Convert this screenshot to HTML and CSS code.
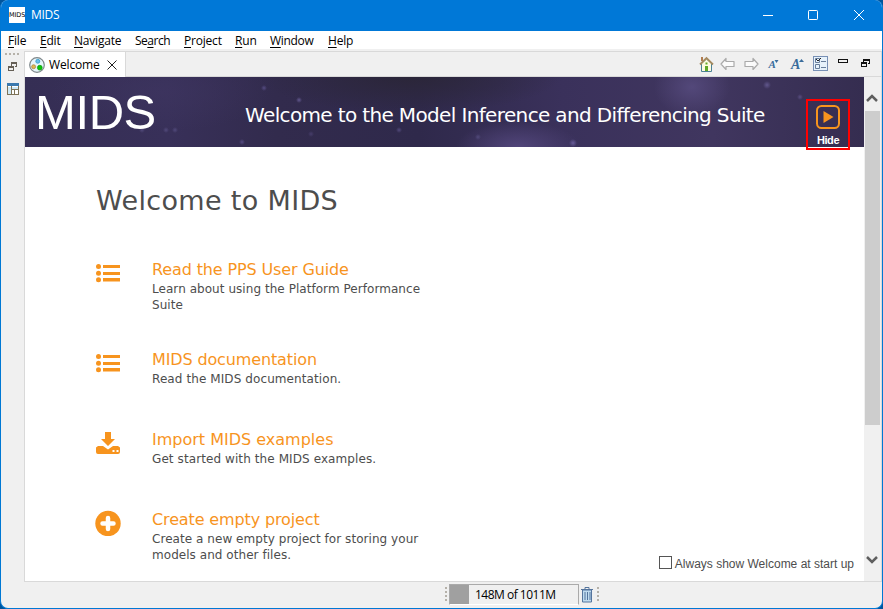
FILE: index.html
```html
<!DOCTYPE html>
<html lang="en">
<head>
<meta charset="utf-8">
<title>MIDS</title>
<link rel="stylesheet" href="styles.css">
</head>
<body>
<div class="window">
  <header class="titlebar">
    <span class="app-icon">MIDS</span>
    <span class="app-name">MIDS</span>
    <svg class="controls" width="102" height="12" viewBox="0 0 102 12" fill="none" stroke="#fff"><path d="M0 6.500h10"/><rect x="45.500" y="1.500" width="9" height="9" rx=".7"/><path d="M91 1l10 10M101 1L91 11"/></svg>
  </header>
  <nav class="menu">
    <span class="m-file"><u>F</u>ile</span><span class="m-edit"><u>E</u>dit</span><span class="m-nav"><u>N</u>avigate</span><span class="m-search">Se<u>a</u>rch</span><span class="m-project"><u>P</u>roject</span><span class="m-run"><u>R</u>un</span><span class="m-window"><u>W</u>indow</span><span class="m-help"><u>H</u>elp</span>
  </nav>
  <div class="workbench">
    <aside class="trim">
      <svg width="24" height="50" viewBox="0 0 24 50" shape-rendering="crispEdges">
        <path d="M4 5h14" stroke="#b5b1a9" stroke-width="2" stroke-dasharray="2 2"/>
        <g fill="none" stroke="#655f56"><path d="M10.500 17v-3.500h5v4h-2M10 14.500h6"/><path d="M7.500 17.500h5v4h-5zM7 18.500h6"/></g>
        <rect x="6.500" y="34.500" width="11" height="11" fill="#fff" stroke="#7d7358"/><path d="M6 34h12v3H6z" fill="#3b79ae"/><path d="M7 38h3v7H7zM11 38h6v2h-6z" fill="#cce8f6"/><path d="M10.500 37v8M10 40.500h8M13.500 40.500v4" stroke="#7d7358" fill="none"/>
      </svg>
    </aside>
    <main class="part">
      <div class="tabs">
        <div class="tab">
          <svg width="16" height="16" viewBox="0 0 16 16"><circle cx="8" cy="8" r="7.300" fill="#e6f5fb" stroke="#7e878a" stroke-width="1.200"/><circle cx="8.800" cy="4.300" r="2" fill="#68bfe8" stroke="#2892c5" stroke-width=".7"/><circle cx="4.600" cy="9.700" r="2" fill="#dfb454" stroke="#a88435" stroke-width=".7"/><circle cx="10.800" cy="10.700" r="2.400" fill="#0ac60a" stroke="#079407" stroke-width=".7"/></svg>
          <span>Welcome</span>
          <svg width="10" height="10" viewBox="0 0 10 10" stroke="#222"><path d="M.5.5l9 9M9.500.5l-9 9"/></svg>
        </div>
        <div class="tools">
          <svg width="180" height="24" viewBox="0 0 180 24">
            <path d="M4.500 11.500l5-4.500 5 4.500v8h-10z" fill="#fffbe1" stroke="#4c8295"/><path d="M5 5v4" stroke="#b07c50" stroke-width="2"/><path d="M3 12.500L9.500 6l6.500 6.500" fill="none" stroke="#a58a60" stroke-width="1.800"/><path d="M8 14h3v5H8z" fill="#62a927"/><path d="M8.500 10.500h2v2h-2z" fill="#62a927"/>
            <g fill="#fbfbfb" stroke="#aaa" stroke-width="1.200" stroke-linejoin="round"><path d="M24 12l5-5.500v3h8v5h-8v3z"/><path d="M61 12l-5-5.500v3h-8v5h8v3z"/></g>
            <text class="font-small" x="71.500" y="16">A</text><path d="M77.500 8h4l-2 3z" fill="#396c9c"/>
            <text class="font-large" x="94" y="17">A</text><path d="M102 10h5l-2.500-3z" fill="#396c9c"/>
            <rect x="116.500" y="4.500" width="14" height="14" fill="#e7f2fb" stroke="#7890b5"/><g fill="none" stroke="#687e9b"><path d="M118.500 6.500h4v4h-4zM118.500 12.500h4v4h-4zM124 9.500h5M124 15.500h5"/><path d="M119 7l2 2 3-3" stroke="#222"/></g>
            <g fill="none" stroke="#111" shape-rendering="crispEdges"><rect x="141.500" y="7.500" width="9" height="3"/><path d="M166.500 10V7.500h6v4h-2M166 8.500h7M164.500 10.500h5v4h-5zM164 11.500h6"/></g>
          </svg>
        </div>
      </div>
      <div class="viewport">
        <div class="page">
          <section class="banner">
            <div class="logo">MIDS</div>
            <div class="headline">Welcome to the Model Inference and Differencing Suite</div>
            <div class="hide">
              <svg width="24" height="24" viewBox="0 0 24 24"><rect x="1" y="1" width="22" height="22" rx="4.500" fill="none" stroke="#f7941e" stroke-width="2"/><path d="M7.500 6v12l10-6z" fill="#f7941e"/></svg>
              <span>Hide</span>
            </div>
          </section>
          <section class="content">
            <h1>Welcome to MIDS</h1>
            <article class="entry first">
              <svg width="26" height="26" viewBox="0 0 26 26" fill="#f7941e"><g><circle cx="3.500" cy="6.500" r="2.500"/><circle cx="3.500" cy="13.200" r="2.500"/><circle cx="3.500" cy="19.800" r="2.500"/></g><path d="M8 5h17v3H8zM8 12h17v3H8zM8 18h17v3.500H8z"/></svg>
              <div><h2 class="t1">Read the PPS User Guide</h2><p>Learn about using the Platform Performance<br>Suite</p></div>
            </article>
            <article class="entry">
              <svg width="26" height="26" viewBox="0 0 26 26" fill="#f7941e"><g><circle cx="3.500" cy="6.500" r="2.500"/><circle cx="3.500" cy="13.200" r="2.500"/><circle cx="3.500" cy="19.800" r="2.500"/></g><path d="M8 5h17v3H8zM8 12h17v3H8zM8 18h17v3.500H8z"/></svg>
              <div><h2 class="t2">MIDS documentation</h2><p class="doc">Read the MIDS documentation.</p></div>
            </article>
            <article class="entry">
              <svg width="26" height="26" viewBox="0 0 26 26" fill="#f7941e"><path d="M10 2h6v7h4l-7 7-7-7h4z"/><path d="M3 16h5l5 3.500 5-3.500h5l2 1.500V22q0 2-2 2H3q-2 0-2-2v-4.500z"/><path d="M17.500 20h2v2h-2zM21.500 20h2v2h-2z" fill="#fff"/></svg>
              <div><h2 class="t3">Import MIDS examples</h2><p class="import">Get started with the MIDS examples.</p></div>
            </article>
            <article class="entry">
              <svg width="26" height="26" viewBox="0 0 26 26"><circle cx="13" cy="13.500" r="12.700" fill="#f7941e"/><path d="M13 8v11M7.500 13.500h11" stroke="#fff" stroke-width="4.500" stroke-linecap="round"/></svg>
              <div><h2 class="t4">Create empty project</h2><p>Create a new empty project for storing your<br>models and other files.</p></div>
            </article>
          </section>
          <label class="startup"><span class="box"></span>Always show Welcome at start up</label>
        </div>
        <div class="scrollbar">
          <svg width="16" height="34" viewBox="0 0 16 34"><path d="M3 24l5-5 5 5" fill="none" stroke="#5f5f5f" stroke-width="2.500"/></svg>
          <div class="thumb"></div>
          <svg width="16" height="34" viewBox="0 0 16 34"><path d="M3 10l5 5 5-5" fill="none" stroke="#5f5f5f" stroke-width="2.500"/></svg>
        </div>
      </div>
    </main>
  </div>
  <footer class="status">
    <i class="grip"></i>
    <div class="heap"><span class="used"></span><span class="heap-text">148M of 1011M</span></div>
    <svg width="18" height="21" viewBox="0 0 18 21"><path d="M3.500 6h9v12h-9z" fill="#bfdbef" stroke="#55759d"/><path d="M2 5.500h12M6 5V3.500h4V5M6 8v8M8.500 8v8M11 8v8" fill="none" stroke="#55759d"/></svg>
    <i class="grip end"></i>
  </footer>
</div>
</body>
</html>
```
FILE: styles.css
```css
* { box-sizing: border-box; }
body { margin: 0; background: #00559d; overflow: hidden; }
svg { display: block; flex: none; }
.window { width: 883px; height: 609px; border: solid #0078d4; border-width: 0 1px 1px; border-radius: 8px; overflow: hidden; display: flex; flex-direction: column; background: #f0f0f0; font: 12px/16px "Open Sans", sans-serif; color: #000; }
.titlebar { height: 31px; background: #0078d7; display: flex; align-items: center; padding: 0 17px 1px 8px; color: #fff; flex: none; }
.app-icon { width: 16px; height: 16px; background: #fff; color: #000; font: 6.5px/17px "DejaVu Sans", sans-serif; text-align: center; letter-spacing: -.1px; overflow: hidden; }
.app-name { margin-left: 6px; letter-spacing: -.3px; }
.controls { margin-left: auto; }
.menu { height: 18px; background: #fff; display: flex; padding-left: 7px; line-height: 20px; letter-spacing: -.2px; white-space: nowrap; flex: none; }
.menu u { text-underline-offset: 2px; text-decoration-thickness: 1px; text-decoration-skip-ink: none; }
.m-file { width: 32px; } .m-edit { width: 34px; } .m-nav { width: 61px; }
.m-search { width: 49px; letter-spacing: -.5px; } .m-project { width: 51px; } .m-run { width: 35px; } .m-window { width: 58px; letter-spacing: -.3px; }
.workbench { height: 533px; display: flex; flex: none; }
.trim { width: 23px; }
.trim svg { width: 24px; }
.part { flex: 1; margin-top: 2px; border: 1px solid #d9d9d9; display: flex; flex-direction: column; min-width: 0; }
.tabs { height: 25px; border-bottom: 1px solid #d9d9d9; display: flex; justify-content: space-between; flex: none; }
.tab { width: 101px; height: 25px; background: #fff; border-right: 1px solid #d9d9d9; display: flex; align-items: center; padding: 0 0 0 4px; }
.tab span { margin: 0 7px 0 4px; width: 51px; letter-spacing: -.15px; }
.tools { width: 184px; }
.font-small, .font-large { font: italic bold 11px "Liberation Serif", serif; fill: #396c9c; }
.font-large { font-size: 14px; }
.viewport { display: flex; height: 504px; }
.page { width: 839px; background: #fff; position: relative; }
.banner {
  height: 70px; display: flex; color: #fff;
  background:
    radial-gradient(circle at 117px 53px, #51497a 0, transparent 3px),
    radial-gradient(circle at 141px 53px, #51497a 0, transparent 3px),
    radial-gradient(circle at 150px 53px, #51497a 0, transparent 3px),
    radial-gradient(circle at 239px 11px, #554b82 0, transparent 3px),
    radial-gradient(circle at 274px 23px, #61578d 0, transparent 3px),
    radial-gradient(circle at 217px 65px, #554b82 0, transparent 3px),
    radial-gradient(circle at 286px 57px, #463d6a 0, transparent 3px),
    radial-gradient(circle at 374px 53px, #51497a 0, transparent 3px),
    radial-gradient(circle at 453px 60px, #51497a 0, transparent 3px),
    radial-gradient(circle at 548px 66px, #685c99 0, transparent 4px),
    radial-gradient(circle at 742px 8px, #61578d 0, transparent 4px),
    radial-gradient(circle at 775px 20px, #584d80 0, transparent 3px),
    radial-gradient(ellipse 62px 26px at 493px 70px, #51457a 0, transparent),
    radial-gradient(ellipse 38px 30px at 667px 10px, #53487a 0, transparent),
    radial-gradient(ellipse 110px 40px at 135px 15px, #40376380 0, transparent),
    radial-gradient(ellipse 150px 36px at 385px 0, #2b2639 0, transparent),
    linear-gradient(90deg, #352e54 0, #383059 17%, #322b4d 30%, #2f294b 47%, #3a315b 64%, #40365f 82%, #352d50);
}
.logo { width: 220px; padding-left: 10px; font: 49px/70px "Liberation Sans", sans-serif; letter-spacing: -.4px; }
.headline { width: 561px; font: 20px/76px "DejaVu Sans", sans-serif; letter-spacing: -.64px; white-space: nowrap; }
.hide { width: 44px; height: 51px; margin-top: 22px; border: 2px solid #f00; display: flex; flex-direction: column; align-items: center; padding-top: 4px; font: bold 11px/13px "Liberation Sans", sans-serif; }
.hide span { margin-top: 5px; letter-spacing: -.4px; }
.content { padding: 35px 0 0 70px; color: #4d4d4d; font-family: "DejaVu Sans", sans-serif; }
h1 { margin: 0; padding-left: 1px; font-size: 27px; line-height: 38px; font-weight: 400; letter-spacing: .34px; white-space: nowrap; }
.entry { height: 80px; display: flex; gap: 31px; }
.entry.first { height: 90px; margin-top: 40px; }
h2 { margin: 0; font-size: 16px; line-height: 20px; font-weight: 400; color: #f7941e; white-space: nowrap; }
.t1, .t2, .t4 { letter-spacing: -.13px; }
p { margin: 2px 0 0; font-size: 12px; line-height: 15.5px; letter-spacing: .05px; white-space: nowrap; }
.doc, .import { letter-spacing: .09px; }
.startup { position: absolute; right: 10px; bottom: 9px; display: flex; align-items: center; font: 12px/16px "Liberation Sans", sans-serif; color: #4d4d4d; white-space: nowrap; }
.box { width: 13px; height: 13px; border: 1px solid #555; margin: -4px 3px 0 0; }
.scrollbar { width: 17px; background: #f0f0f0; display: flex; flex-direction: column; }
.thumb { width: 15px; height: 314px; margin: 0 0 122px 1px; background: #cdcdcd; }
.status { height: 26px; display: flex; padding: 2px 0 0 444px; }
.grip { width: 4px; height: 16px; margin-top: 3px; background: repeating-linear-gradient(#b5b1a9 0 2px, transparent 2px 4px) 0 0/2px 16px no-repeat; }
.heap { width: 130px; height: 21px; border: 1px solid #aaa; border-bottom-color: #fff; display: flex; }
.used { width: 19px; background: #a0a0a0; }
.heap-text { margin-left: 6px; line-height: 20px; letter-spacing: -.5px; white-space: nowrap; }
.end { margin-left: 0; }
```
